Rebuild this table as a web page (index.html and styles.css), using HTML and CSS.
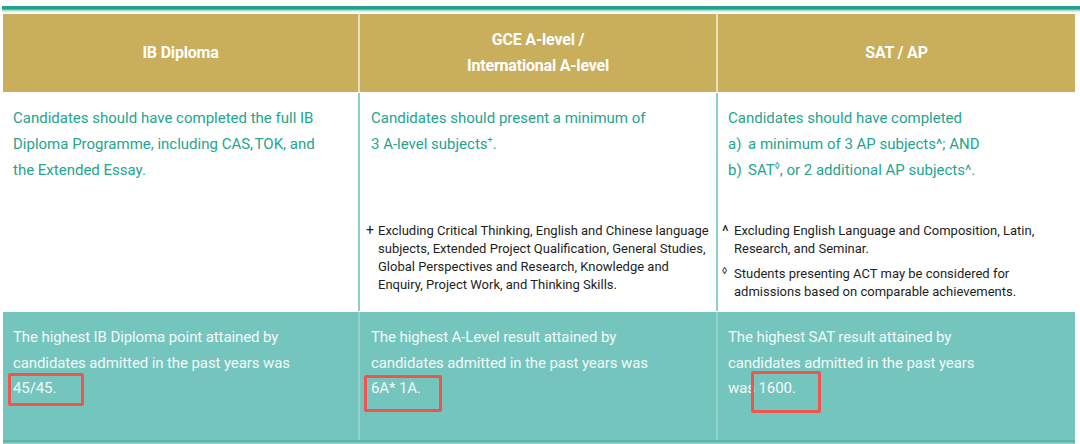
FILE: index.html
```html
<!DOCTYPE html>
<html>
<head>
<meta charset="utf-8">
<link rel="stylesheet" href="styles.css">
</head>
<body>
<div class="topline"></div>
<div class="table">
  <div class="row head">
    <div class="cell"><div>IB Diploma</div></div>
    <div class="cell"><div>GCE A-level /<br>International A-level</div></div>
    <div class="cell"><div>SAT / AP</div></div>
  </div>
  <div class="row req">
    <div class="cell">
      <p class="main narrow">Candidates should have completed the full IB Diploma Programme, including CAS,&#8202;TOK, and the Extended Essay.</p>
    </div>
    <div class="cell">
      <p class="main">Candidates should present a minimum of<br>3 A-level subjects<sup class="plus">+</sup>.</p>
      <div class="note"><span class="mark">+</span><span>Excluding Critical Thinking, English and Chinese language subjects, Extended Project Qualification, General Studies, Global Perspectives and Research, Knowledge and Enquiry, Project Work, and Thinking Skills.</span></div>
    </div>
    <div class="cell c3">
      <p class="main">Candidates should have completed<br><span class="li">a)</span>a minimum of 3 AP subjects^; AND<br><span class="li">b)</span>SAT<sup class="dia">&#9674;</sup>, or 2 additional AP subjects^.</p>
      <div class="note"><span class="mark caret">^</span><span>Excluding English Language and Composition, Latin, Research, and Seminar.</span></div>
      <div class="note n2"><span class="mark dm">&#9674;</span><span>Students presenting ACT may be considered for admissions based on comparable achievements.</span></div>
    </div>
  </div>
  <div class="row result">
    <div class="cell">
      <p>The highest IB Diploma point attained by candidates admitted in the past years was 45/45.</p>
      <div class="box b1"></div>
    </div>
    <div class="cell">
      <p>The highest A-Level result attained by candidates admitted in the past years was 6A* 1A.</p>
      <div class="box b2"></div>
    </div>
    <div class="cell">
      <p>The highest SAT result attained by<br>candidates admitted in the past years<br>was 1600.</p>
      <div class="box b3"></div>
    </div>
  </div>
  <div class="next"></div>
</div>
</body>
</html>
```
FILE: styles.css
```css
html, body {
  margin: 0;
  padding: 0;
  background: #ffffff;
}
body {
  width: 1080px;
  height: 444px;
  overflow: hidden;
  font-family: Roboto, "Liberation Sans", sans-serif;
}
.topline {
  margin-top: 6px;
  height: 7px;
  background: linear-gradient(to bottom, #22a08c 0, #22a08c 3px, #8fd0c5 4px, #c9e9e3 5px, #eaf6f3 6px, #ffffff 7px);
  margin-left: 2px;
}
.table {
  margin-top: 1px;
  padding-left: 3px;
  width: 1072px;
}
.row {
  display: grid;
  grid-template-columns: 355px 356px 357px;
  column-gap: 2px;
}
.cell {
  position: relative;
  box-sizing: border-box;
}
.head {
  background: #eadfb9;
  height: 78px;
}
.head .cell {
  background: #c9ae5c;
  color: #ffffff;
  font-weight: 700;
  font-size: 16px;
  line-height: 26px;
  letter-spacing: -0.2px;
  text-align: center;
  display: flex;
  align-items: center;
  justify-content: center;
}
.req {
  margin-top: 1px;
  background: #8fcfc6;
  height: 218px;
}
.req .cell {
  background: #ffffff;
  padding: 12px 4px 0 10px;
}
.req .cell:nth-child(2) {
  padding-left: 11px;
}
.main {
  margin: 0;
  min-height: 117px;
  color: #25a48f;
  font-size: 15px;
  line-height: 26px;
  letter-spacing: 0;
}
.main.narrow {
  width: 312px;
}
.main sup {
  font-size: 9px;
  line-height: 0;
  vertical-align: 6px;
}
.main sup.dia {
  font-size: 10px;
}
.li {
  display: inline-block;
  width: 20px;
}
.note {
  display: flex;
  color: #1e1e1e;
  font-size: 13px;
  line-height: 18px;
  letter-spacing: 0;
  margin-left: -5px;
}
.c3 .note {
  margin-left: -6px;
}
.note .mark {
  flex: 0 0 12px;
  font-size: 14px;
  line-height: 16px;
}
.note .caret {
  font-size: 16px;
  line-height: 20px;
}
.note .dm {
  font-size: 10px;
  line-height: 12px;
}
.n2 {
  margin-top: 7px;
}
.result {
  margin-top: 1px;
  background: #93d3cb;
  height: 128px;
}
.result .cell {
  background: #74c5bd;
  padding: 13px 10px 0 10px;
}
.result .cell:nth-child(2) {
  padding-left: 11px;
}
.result p {
  margin: 0;
  color: #f3faf8;
  font-size: 15px;
  line-height: 25.5px;
  letter-spacing: -0.1px;
  width: 295px;
}
.result .cell:nth-child(3) p {
  width: 300px;
}
.box {
  position: absolute;
  border: 3px solid #f0544f;
  border-radius: 2px;
  box-sizing: border-box;
}
.b1 { left: 5px; top: 61px; width: 76px; height: 33px; }
.b2 { left: 4px; top: 63px; width: 78px; height: 37px; }
.b3 { left: 33px; top: 59px; width: 70px; height: 42px; }
.next {
  height: 6px;
  background: linear-gradient(to bottom, #5fb5ac 0, #5fb5ac 2px, #8fd0c7 3px, #a6dbd3 6px);
}
```
